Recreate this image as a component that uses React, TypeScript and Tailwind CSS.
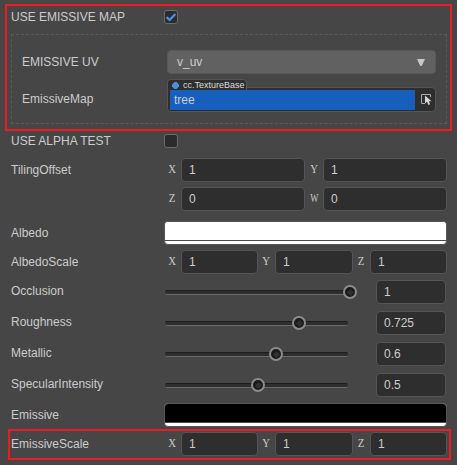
import React from "react";

const inputBox =
  "flex h-6 items-center rounded border border-[#555555] bg-[#2e2e2e] pl-[7px] text-[12px] leading-none text-[#cccccc]";

function Label({ children }: { children: React.ReactNode }) {
  return <span className="w-[154px] shrink-0 whitespace-nowrap">{children}</span>;
}

function Axis({ name, value, width, narrow }: { name: string; value: string; width: string; narrow?: boolean }) {
  return (
    <div className="flex items-center">
      <span
        className={`flex w-4 shrink-0 justify-center pb-[2px] pr-[2px] font-['Liberation_Serif',serif] text-[12px] leading-none ${
          narrow ? "scale-x-[.72]" : "scale-x-[.9]"
        }`}
      >
        {name}
      </span>
      <div className={`${inputBox} ${width}`}>{value}</div>
    </div>
  );
}

function Check({ checked }: { checked?: boolean }) {
  return (
    <span className="flex size-[14px] items-center justify-center rounded-[3px] border border-[#6b6b6b] bg-[#2b2b2b]">
      {checked && (
        <svg width="12" height="12" viewBox="0 0 12 12" fill="none">
          <path d="M1.6 6.2 4.6 9 10.4 3" stroke="#4a8fe2" strokeWidth="2.3" />
        </svg>
      )}
    </span>
  );
}

function SliderRow({ label, value, left }: { label: string; value: string; left: number }) {
  return (
    <div className="mb-[7px] flex h-6">
      <div className="flex h-[22px] items-center">
        <Label>{label}</Label>
      </div>
      <div className="relative mt-[10px] h-[5px] w-[183px] rounded-[2px] border-t border-b border-t-[#1c1c1c] border-b-[#6a6a6a] bg-[#2e2e2e]">
        <span
          className="absolute -top-[6px] flex size-[14px] items-center justify-center rounded-full border-2 border-[#8c8c8c] bg-[#1a1a1a]"
          style={{ left }}
        >
          <span className="size-[5px] rotate-45 bg-[#303030]" />
        </span>
      </div>
      <div className={`${inputBox} ml-7 w-[70px]`}>{value}</div>
    </div>
  );
}

function ColorRow({ label, fill }: { label: string; fill: string }) {
  return (
    <div className="flex h-6 items-center">
      <span className="w-[153px] shrink-0">{label}</span>
      <div className="flex h-6 w-[283px] flex-col overflow-hidden rounded border border-[#555555] bg-white">
        <div className={`h-[18px] ${fill}`} />
        <div className="h-px bg-[#4a4a4a]" />
      </div>
    </div>
  );
}

function ScaleAxes() {
  return (
    <div className="flex">
      <Axis name="X" value="1" width="w-[77px]" />
      <div className="w-px" />
      <Axis name="Y" value="1" width="w-[78px]" />
      <div className="w-px" />
      <Axis name="Z" value="1" width="w-[77px]" />
    </div>
  );
}

export default function App() {
  return (
    <div className="h-[465px] w-[457px] overflow-hidden bg-[#464646] pt-1 font-['Liberation_Sans',Arial,sans-serif] text-[12px] leading-[14px] text-[#cccccc]">
      <section className="ml-[5px] h-[127px] w-[447px] border-2 border-[#ed1c24] pl-1">
        <div className="flex h-7 items-center pb-[6px]">
          <span className="w-[153px]">USE EMISSIVE MAP</span>
          <Check checked />
        </div>
        <div className="h-[90px] w-[436px] border border-dashed border-[#5a5a5a] pl-[10px] pt-[15px]">
          <div className="flex h-6 items-center">
            <span className="w-[145px]">EMISSIVE UV</span>
            <div className="flex h-6 w-[269px] items-center justify-between rounded border border-[#575757] bg-[#616161] pl-[9px] pr-[10px]">
              <span>v_uv</span>
              <svg width="8" height="7" viewBox="0 0 8 7">
                <path d="M0 0h8L4.7 7H3.3Z" fill="#c8c8c8" />
              </svg>
            </div>
          </div>
          <div className="mt-[13px] flex h-[25px]">
            <span className="-mt-px flex w-[145px] items-center pb-px">EmissiveMap</span>
            <div className="relative flex h-[25px] w-[269px] items-center rounded border border-[#555555] bg-[#2e2e2e] pl-[2px]">
              <div className="absolute -left-px -top-[9px] flex h-[11px] w-[80px] items-center gap-1 rounded-t border border-b-0 border-[#555555] bg-[#2e2e2e] pl-1 text-[9px] leading-[10px] text-[#dddddd]">
                <svg className="shrink-0" width="7" height="7" viewBox="0 0 7 7">
                  <path d="M2.5 0h2L7 2.5v2L4.500 7h-2L0 4.500v-2Z" fill="#4a8fe2" />
                </svg>
                cc.TextureBase
              </div>
              <div className="flex h-5 w-[245px] items-center bg-[#175fbd] pl-1">tree</div>
              <svg className="ml-[6px]" width="12" height="13" viewBox="0 0 12 13">
                <path d="M9.5 4V1.500h-9v9H4" fill="none" stroke="#aaa" />
                <path d="M4 2.500v8l2-1.700 1.400 3.200 1.700-.8-1.300-3h2.700Z" fill="#d6d6d6" />
              </svg>
            </div>
          </div>
        </div>
      </section>

      <div className="flex flex-col pl-[11px]">
        <div className="mt-[3px] flex h-[14px] items-center">
          <span className="w-[153px]">USE ALPHA TEST</span>
          <Check />
        </div>

        <div className="mt-[10px] flex">
          <div className="flex h-6 items-center">
            <Label>TilingOffset</Label>
          </div>
          <div className="grid grid-cols-2 gap-x-[2px] gap-y-[5px]">
            <Axis name="X" value="1" width="w-[124px]" />
            <Axis name="Y" value="1" width="w-[124px]" />
            <Axis name="Z" value="0" width="w-[124px]" />
            <Axis name="W" value="0" width="w-[124px]" narrow />
          </div>
        </div>

        <div className="mt-[10px]">
          <ColorRow label="Albedo" fill="bg-white" />
        </div>

        <div className="mt-[5px] flex h-6 items-center">
          <Label>AlbedoScale</Label>
          <ScaleAxes />
        </div>

        <div className="mt-[6px]">
          <SliderRow label="Occlusion" value="1" left={178} />
          <SliderRow label="Roughness" value="0.725" left={127} />
          <SliderRow label="Metallic" value="0.6" left={104} />
          <SliderRow label="SpecularIntensity" value="0.5" left={86} />
        </div>

        <div className="-mt-px">
          <ColorRow label="Emissive" fill="bg-black" />
        </div>
      </div>

      <section className="ml-2 mt-[2px] h-[31px] w-[443px] border-2 border-[#ed1c24] pl-px pt-px">
        <div className="flex h-6 items-center">
          <Label>EmissiveScale</Label>
          <ScaleAxes />
        </div>
      </section>
    </div>
  );
}
